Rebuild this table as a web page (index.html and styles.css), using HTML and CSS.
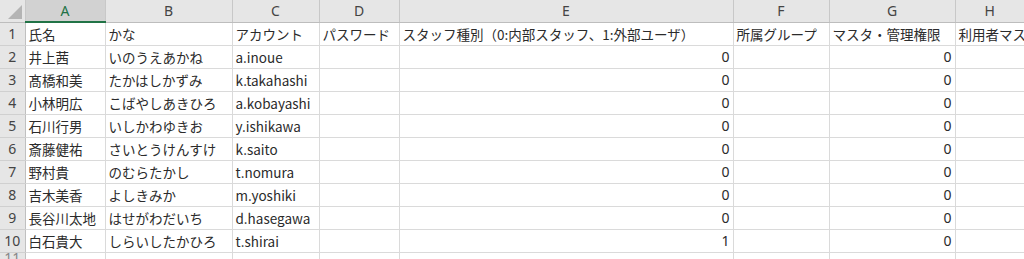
FILE: index.html
```html
<!DOCTYPE html>
<html lang="ja">
<head>
<meta charset="utf-8">
<link rel="stylesheet" href="styles.css">
</head>
<body>
<table class="sheet">
  <colgroup>
    <col class="w-rh"><col class="w-a"><col class="w-b"><col class="w-c"><col class="w-d"><col class="w-e"><col class="w-f"><col class="w-g"><col class="w-h">
  </colgroup>
  <thead>
    <tr class="colhead">
      <th class="corner"><span class="tri"></span></th>
      <th class="sel">A</th><th>B</th><th>C</th><th>D</th><th>E</th><th>F</th><th>G</th><th class="last">H</th>
    </tr>
  </thead>
  <tbody>
    <tr><th>1</th><td>氏名</td><td>かな</td><td>アカウント</td><td>パスワード</td><td>スタッフ種別（0:内部スタッフ、1:外部ユーザ）</td><td>所属グループ</td><td>マスタ・管理権限</td><td class="clip">利用者マス</td></tr>
    <tr><th>2</th><td>井上茜</td><td>いのうえあかね</td><td>a.inoue</td><td></td><td class="n">0</td><td></td><td class="n">0</td><td></td></tr>
    <tr><th>3</th><td>髙橋和美</td><td>たかはしかずみ</td><td>k.takahashi</td><td></td><td class="n">0</td><td></td><td class="n">0</td><td></td></tr>
    <tr><th>4</th><td>小林明広</td><td>こばやしあきひろ</td><td>a.kobayashi</td><td></td><td class="n">0</td><td></td><td class="n">0</td><td></td></tr>
    <tr><th>5</th><td>石川行男</td><td>いしかわゆきお</td><td>y.ishikawa</td><td></td><td class="n">0</td><td></td><td class="n">0</td><td></td></tr>
    <tr><th>6</th><td>斎藤健祐</td><td>さいとうけんすけ</td><td>k.saito</td><td></td><td class="n">0</td><td></td><td class="n">0</td><td></td></tr>
    <tr><th>7</th><td>野村貴</td><td>のむらたかし</td><td>t.nomura</td><td></td><td class="n">0</td><td></td><td class="n">0</td><td></td></tr>
    <tr><th>8</th><td>吉木美香</td><td>よしきみか</td><td>m.yoshiki</td><td></td><td class="n">0</td><td></td><td class="n">0</td><td></td></tr>
    <tr><th>9</th><td>長谷川太地</td><td>はせがわだいち</td><td>d.hasegawa</td><td></td><td class="n">0</td><td></td><td class="n">0</td><td></td></tr>
    <tr><th>10</th><td>白石貴大</td><td>しらいしたかひろ</td><td>t.shirai</td><td></td><td class="n">1</td><td></td><td class="n">0</td><td></td></tr>
    <tr class="partial"><th>11</th><td></td><td></td><td></td><td></td><td></td><td></td><td></td><td></td></tr>
  </tbody>
</table>
</body>
</html>
```

FILE: styles.css
```css
html, body {
  margin: 0;
  padding: 0;
  background: #ffffff;
  overflow: hidden;
}
body {
  width: 1024px;
  height: 259px;
  font-family: "Noto Sans CJK JP", "Noto Sans", sans-serif;
  color: #2b2b2b;
}
.sheet {
  border-collapse: collapse;
  table-layout: fixed;
  width: 1024px;
  font-size: 13.5px;
}
.w-rh { width: 25px; }
.w-a { width: 80px; }
.w-b { width: 127px; }
.w-c { width: 87px; }
.w-d { width: 80px; }
.w-e { width: 334px; }
.w-f { width: 96px; }
.w-g { width: 126px; }
.w-h { width: 69px; }

.sheet td, .sheet th {
  padding: 0 3px;
  white-space: nowrap;
  overflow: hidden;
  box-sizing: border-box;
  line-height: 20px;
}
.sheet td {
  height: 23px;
  border-right: 1px solid #dadada;
  border-bottom: 1px solid #dadada;
  text-align: left;
  vertical-align: middle;
  padding-top: 1px;
}
.sheet td.n {
  text-align: right;
  font-family: "Noto Sans", sans-serif;
  font-size: 14px;
}
.sheet td.clip {
  text-overflow: clip;
}

.colhead th {
  height: 22px;
  background: #e6e6e6;
  border-right: 1px solid #c8c8c8;
  border-bottom: 1px solid #bdbdbd;
  font-family: "Noto Sans", sans-serif;
  font-weight: normal;
  font-size: 14px;
  color: #444444;
  text-align: center;
  padding: 0;
}
.colhead th.sel {
  background: #d2d2d2;
  color: #217346;
  border-bottom: 2px solid #217346;
}
.colhead th.last {
  border-right: none;
}
.colhead th.corner {
  position: relative;
  background: #e6e6e6;
}
.tri {
  position: absolute;
  right: 3px;
  bottom: 3px;
  width: 0;
  height: 0;
  border-left: 14px solid transparent;
  border-bottom: 14px solid #b4b4b4;
}
tbody th {
  background: #e6e6e6;
  border-right: 1px solid #c0c0c0;
  border-bottom: 1px solid #d0d0d0;
  font-family: "Noto Sans", sans-serif;
  font-weight: normal;
  font-size: 14px;
  color: #444444;
  text-align: center;
  padding: 0;
}
tbody td, tbody th {
  height: 23px;
}
tbody tr.partial th {
  vertical-align: top;
  line-height: 10px;
  color: #888888;
}
```
